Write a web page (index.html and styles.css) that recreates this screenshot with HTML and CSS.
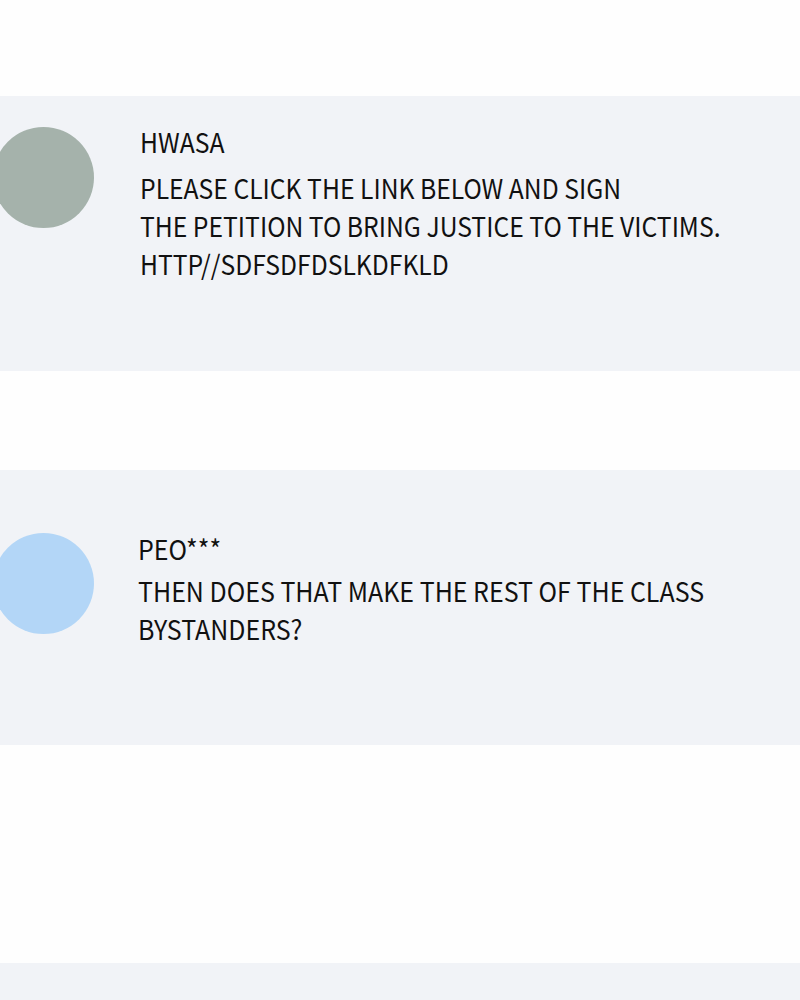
FILE: index.html
```html
<!DOCTYPE html>
<html lang="en">
<head>
  <meta charset="UTF-8">
  <meta name="viewport" content="width=device-width, initial-scale=1.0">
  <title>Comments</title>
  <link rel="stylesheet" href="styles.css">
</head>
<body>
  <div class="feed">
    <section class="comment comment-first">
      <div class="avatar avatar-gray"></div>
      <div class="body">
        <div class="name">HWASA</div>
        <p class="text">PLEASE CLICK THE LINK BELOW AND SIGN<br>THE PETITION TO BRING JUSTICE TO THE VICTIMS.<br>HTTP//SDFSDFDSLKDFKLD</p>
      </div>
    </section>

    <section class="comment comment-second">
      <div class="avatar avatar-blue"></div>
      <div class="body">
        <div class="name">PEO***</div>
        <p class="text">THEN DOES THAT MAKE THE REST OF THE CLASS<br>BYSTANDERS?</p>
      </div>
    </section>

    <section class="comment comment-empty"></section>
  </div>
</body>
</html>
```

FILE: styles.css
```css
body {
  margin: 0;
  background-color: #fefefe;
  font-family: "Noto Sans CJK KR", "Noto Sans", sans-serif;
  color: #111;
}

.feed {
  display: flex;
  flex-direction: column;
  padding-top: 96px;
  overflow: hidden;
}

.comment {
  display: flex;
  align-items: flex-start;
  gap: 46px;
  height: 275px;
  box-sizing: border-box;
  background-color: #f1f3f7;
}

.comment-first {
  padding-top: 31px;
  margin-bottom: 99px;
}

.comment-second {
  padding-top: 63px;
  margin-bottom: 218px;
}

.comment-empty {
  height: 37px;
}

.avatar {
  flex: none;
  width: 101px;
  height: 101px;
  margin-left: -7px;
  border-radius: 50%;
}

.avatar-gray { background-color: #a5b2ab; }
.avatar-blue { background-color: #b3d6f7; }

.body {
  transform: scaleX(0.915);
  transform-origin: left top;
  white-space: nowrap;
  margin-top: -4px;
}

.name {
  font-size: 27px;
  line-height: 38px;
}

.text {
  margin: 8px 0 0;
  font-size: 27px;
  line-height: 38px;
}

.comment-second .body {
  transform: scaleX(0.925);
  margin-left: -2px;
  margin-top: -3px;
}

.comment-second .text {
  margin-top: 4px;
}
```
